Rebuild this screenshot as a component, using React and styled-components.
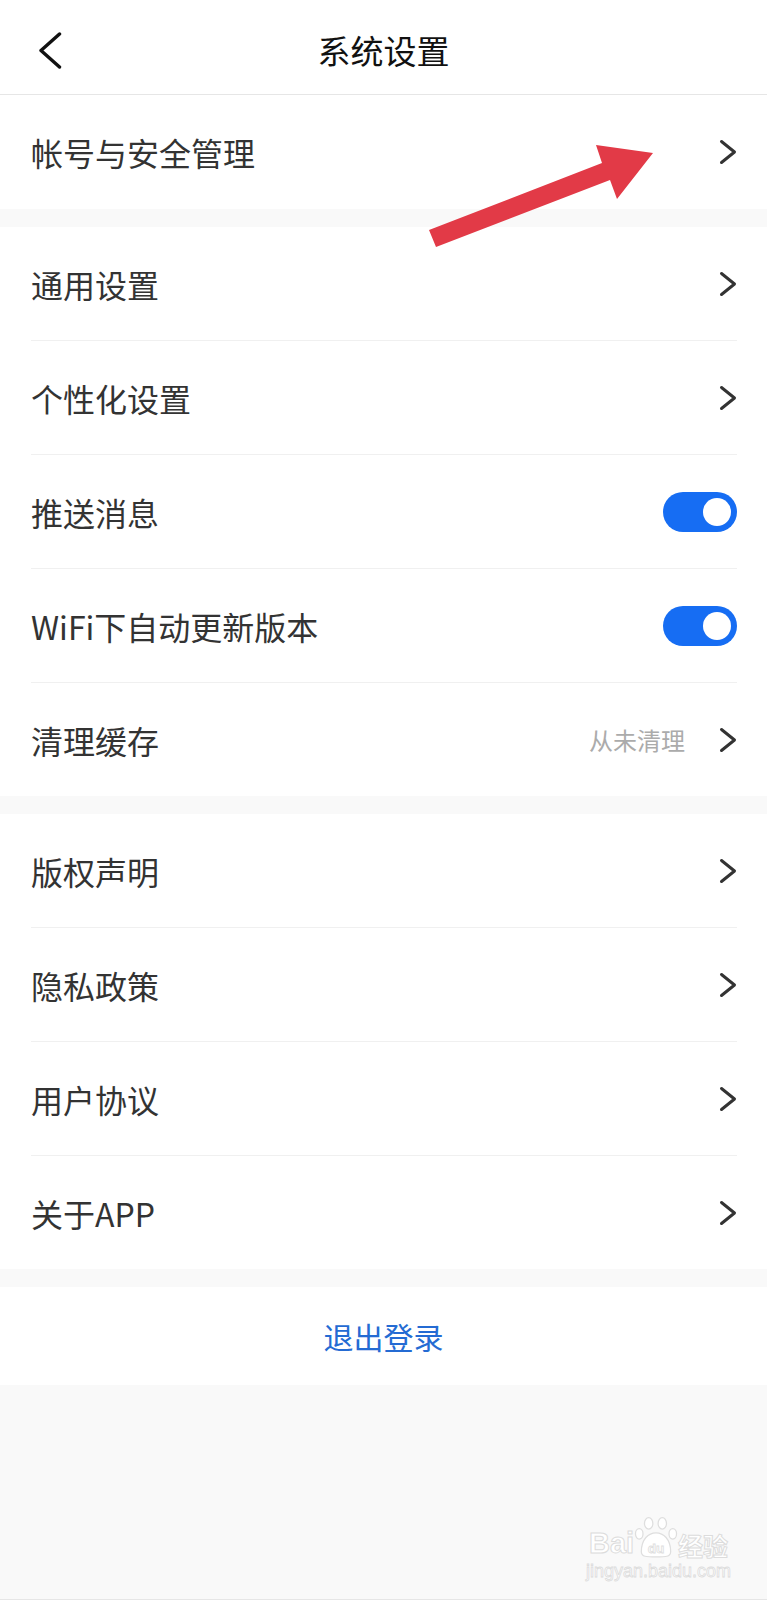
import React from 'react'
import styled, { createGlobalStyle } from 'styled-components'

const GlobalStyle = createGlobalStyle`
  * { box-sizing: border-box; }
  body {
    margin: 0;
    background: #f9f9f9;
    font-family: "Noto Sans CJK SC", "Noto Sans", sans-serif;
  }
`

const sections = [
  [{ label: '帐号与安全管理', type: 'link' }],
  [
    { label: '通用设置', type: 'link' },
    { label: '个性化设置', type: 'link' },
    { label: '推送消息', type: 'toggle' },
    { label: 'WiFi下自动更新版本', type: 'toggle' },
    { label: '清理缓存', type: 'link', hint: '从未清理' },
  ],
  [
    { label: '版权声明', type: 'link' },
    { label: '隐私政策', type: 'link' },
    { label: '用户协议', type: 'link' },
    { label: '关于APP', type: 'link' },
  ],
]

const Chevron = () => (
  <svg width="18" height="26" viewBox="0 0 18 26" fill="none">
    <path d="M2.5 2.5 L15.5 13 L2.5 23.5" stroke="#333" strokeWidth="3" strokeLinecap="round" strokeLinejoin="round" />
  </svg>
)

const BackIcon = () => (
  <svg width="24" height="37" viewBox="0 0 24 37" fill="none">
    <path d="M21.5 2 L3 18.5 L21.5 35" stroke="#111" strokeWidth="3.4" strokeLinecap="round" strokeLinejoin="round" />
  </svg>
)

const App = () => {
  return (
    <>
      <GlobalStyle />
      <Page>
        <Header>
          <BackButton>
            <BackIcon />
          </BackButton>
          <Title>系统设置</Title>
          <span />
        </Header>

        <Content>
          {sections.map((rows, i) => (
            <Section key={i}>
              {rows.map((row) => (
                <Row key={row.label} $tall={i === 0}>
                  <Label>{row.label}</Label>
                  <Right>
                    {row.hint && <Hint>{row.hint}</Hint>}
                    {row.type === 'toggle' ? (
                      <Toggle>
                        <Knob />
                      </Toggle>
                    ) : (
                      <Chevron />
                    )}
                  </Right>
                </Row>
              ))}
            </Section>
          ))}
          <Logout>退出登录</Logout>
        </Content>

        <Arrow width="240" height="115" viewBox="0 0 240 115">
          <polygon points="9,90 182,23 176,5 233,13 197,59 190,40 16,107" fill="#e23a47" />
        </Arrow>

        <Watermark>
          <BrandLine>
            <Brand>Bai</Brand>
            <Paw width="44" height="42" viewBox="0 0 42 40">
              <g fill="#fff" stroke="#dedede" strokeWidth="1.2">
                <ellipse cx="14" cy="7" rx="4" ry="5.5" />
                <ellipse cx="27" cy="7" rx="4" ry="5.5" />
                <ellipse cx="5" cy="17" rx="3.6" ry="5" />
                <ellipse cx="37" cy="17" rx="3.6" ry="5" />
                <path d="M7 34 C7 22 14 16 21 16 C28 16 35 22 35 34 C35 39 30 39 21 39 C12 39 7 39 7 34 Z" />
              </g>
              <text x="21" y="35" textAnchor="middle" fontSize="13" fontWeight="700" fill="#fff" stroke="#dedede" strokeWidth="0.8" fontFamily="Liberation Sans, sans-serif">du</text>
            </Paw>
            <BrandCn>经验</BrandCn>
          </BrandLine>
          <Domain>jingyan.baidu.com</Domain>
        </Watermark>
      </Page>
    </>
  )
}

export default App

const Page = styled.div`
  position: relative;
  min-height: 1600px;
  background: #f9f9f9;
  border-bottom: 1px solid #e6e6e6;
  overflow: hidden;
`

const Header = styled.header`
  height: 95px;
  background: #fff;
  border-bottom: 1px solid #e6e6e6;
  display: grid;
  grid-template-columns: 1fr auto 1fr;
  align-items: center;
  padding: 6px 38px 0;
`

const BackButton = styled.div`
  display: flex;
  align-items: center;
  height: 37px;
`

const Title = styled.h1`
  margin: 0;
  font-size: 33px;
  font-weight: 400;
  color: #111;
  line-height: 1;
`

const Content = styled.main`
  display: flex;
  flex-direction: column;
  gap: 18px;
`

const Section = styled.section`
  background: #fff;
  padding: 0 30px 0 31px;
`

const Row = styled.div`
  height: ${(p) => (p.$tall ? '114px' : '113px')};
  box-sizing: content-box;
  display: flex;
  align-items: center;
  justify-content: space-between;

  & + & {
    border-top: 1px solid #f0f0f0;
  }
`

const Label = styled.span`
  font-size: 32px;
  color: #333;
  line-height: 1;
`

const Right = styled.div`
  display: flex;
  align-items: center;
  gap: 34px;
`

const Hint = styled.span`
  font-size: 24px;
  color: #ababab;
  line-height: 1;
`

const Toggle = styled.div`
  width: 74px;
  height: 40px;
  border-radius: 20px;
  background: #166df3;
  display: flex;
  align-items: center;
  justify-content: flex-end;
  padding-right: 6px;
`

const Knob = styled.div`
  width: 28px;
  height: 28px;
  border-radius: 50%;
  background: #fff;
`

const Logout = styled.div`
  height: 98px;
  background: #fff;
  display: flex;
  align-items: center;
  justify-content: center;
  font-size: 30px;
  color: #246bd3;
`

const Arrow = styled.svg`
  position: absolute;
  left: 420px;
  top: 140px;
  pointer-events: none;
`

const Watermark = styled.div`
  position: absolute;
  left: 586px;
  top: 1516px;
  display: flex;
  flex-direction: column;
  align-items: center;
  gap: 4px;
  pointer-events: none;
`

const BrandLine = styled.div`
  display: flex;
  align-items: flex-end;
`

const Brand = styled.span`
  font-family: "Liberation Sans", sans-serif;
  font-size: 29px;
  font-weight: 700;
  line-height: 1;
  color: #fff;
  -webkit-text-stroke: 1px #dcdcdc;
`

const Paw = styled.svg`
  display: block;
`

const BrandCn = styled.span`
  font-size: 25px;
  font-weight: 700;
  line-height: 1;
  color: #fff;
  -webkit-text-stroke: 1px #dcdcdc;
`

const Domain = styled.span`
  font-family: "Liberation Sans", sans-serif;
  font-size: 18px;
  line-height: 1;
  color: #fff;
  -webkit-text-stroke: 0.8px #dcdcdc;
`
